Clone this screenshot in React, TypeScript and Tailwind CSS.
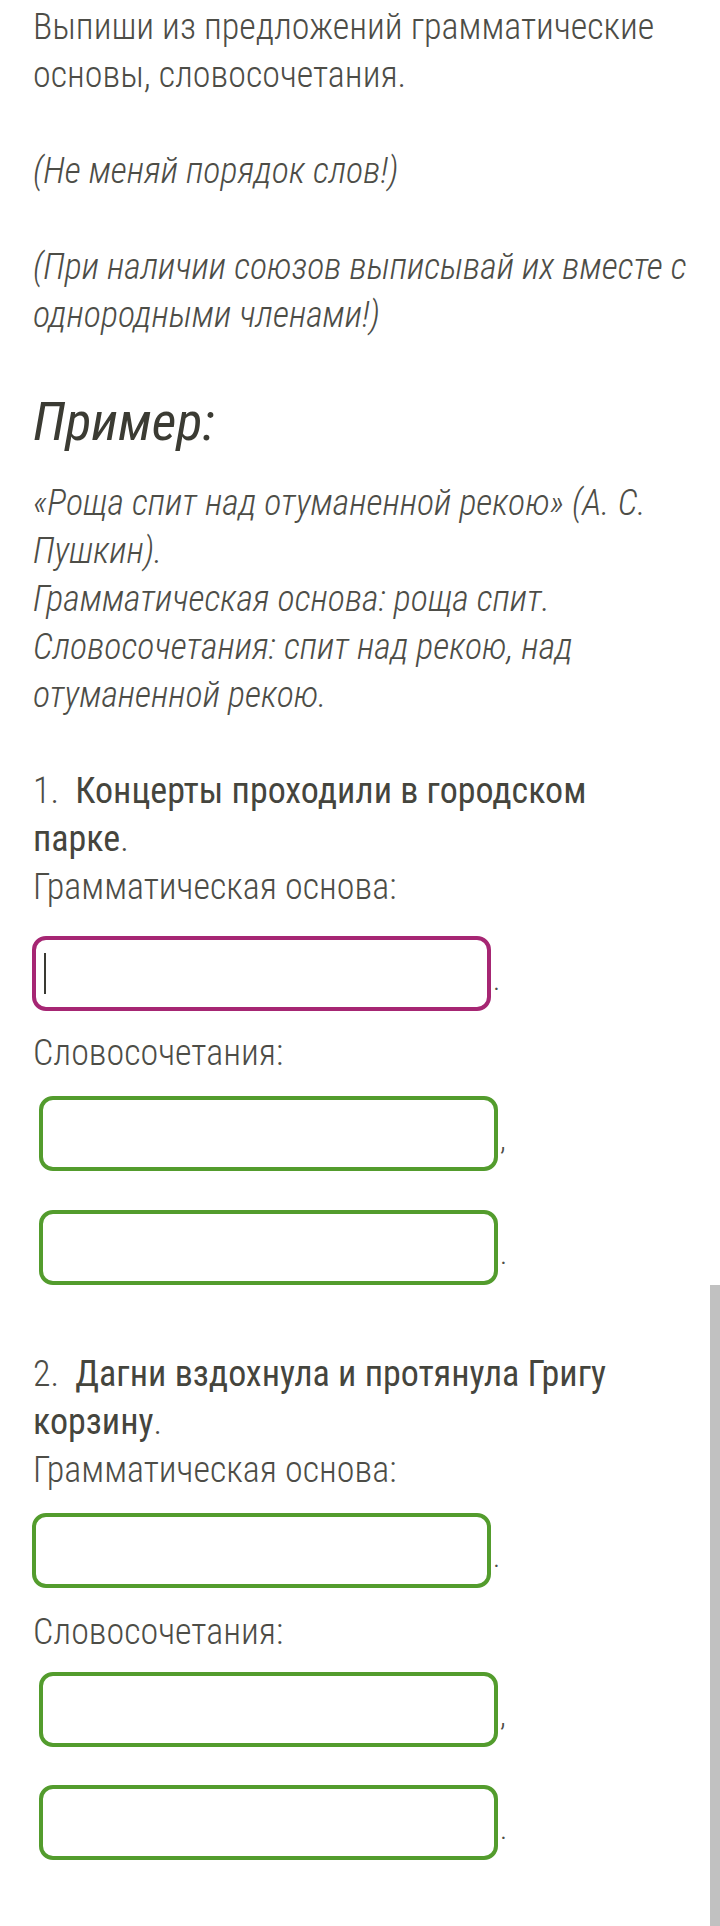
import React from "react";

function Box({ color, ml = "ml-0", cursor = false, punct }: { color: "m" | "g"; ml?: string; cursor?: boolean; punct: string }) {
  return (
    <div className={`flex items-center ${ml}`}>
      <div
        className={
          color === "m"
            ? "relative w-[459px] h-[75px] rounded-[14px] border-[4px] border-[#a62673] bg-white"
            : "relative w-[459px] h-[75px] rounded-[14px] border-[4px] border-[#539c2d] bg-white"
        }
      >
        {cursor && <div className="absolute left-[8px] top-[13px] w-[2px] h-[41px] bg-[#3a3a33]" />}
      </div>
      <span className="ml-[2px] text-[30px] leading-none translate-y-[6px]">{punct}</span>
    </div>
  );
}

export default function App() {
  return (
    <div className="relative min-h-[1926px] bg-white text-[#4d4d47] font-['Roboto_Condensed','Roboto',sans-serif] font-light">
      <div className="pl-[33px] w-[692px] pt-[3px] text-[36px] leading-[48px]">
        <p>Выпиши из предложений грамматические основы, словосочетания.</p>
        <p className="h-[48px]" />
        <p className="italic">(Не меняй порядок слов!)</p>
        <p className="h-[48px]" />
        <p className="italic">(При наличии союзов выписывай их вместе с однородными членами!)</p>
        <h2 className="mt-[52px] text-[54px] leading-[62px] italic font-normal text-[#3b3b33]">Пример:</h2>
        <p className="mt-[26px] italic">
          «Роща спит над отуманенной рекою» (А. С. Пушкин).
          <br />
          Грамматическая основа: роща спит.
          <br />
          Словосочетания: спит над рекою, над отуманенной рекою.
        </p>
        <p className="h-[48px]" />
        <p>
          1.&nbsp; <span className="font-normal text-[#45453d]">Концерты проходили в городском</span>
          <br />
          <span className="font-normal text-[#45453d]">парке</span>.
        </p>
        <p>Грамматическая основа:</p>
        <div className="mt-[25px]">
          <Box color="m" ml="-ml-[1px]" cursor punct="." />
        </div>
        <p className="mt-[18px]">Словосочетания:</p>
        <div className="mt-[19px] flex flex-col gap-[39px]">
          <Box color="g" ml="ml-[6px]" punct="," />
          <Box color="g" ml="ml-[6px]" punct="." />
        </div>
        <p className="mt-[65px]">
          2.&nbsp; <span className="font-normal text-[#45453d]">Дагни вздохнула и протянула Григу корзину</span>.
        </p>
        <p>Грамматическая основа:</p>
        <div className="mt-[19px]">
          <Box color="g" ml="-ml-[1px]" punct="." />
        </div>
        <p className="mt-[20px]">Словосочетания:</p>
        <div className="mt-[16px] flex flex-col gap-[38px]">
          <Box color="g" ml="ml-[6px]" punct="," />
          <Box color="g" ml="ml-[6px]" punct="." />
        </div>
      </div>
      <div className="absolute right-0 top-[1285px] w-[10px] h-[641px] bg-[#c1c1c1]" />
    </div>
  );
}
